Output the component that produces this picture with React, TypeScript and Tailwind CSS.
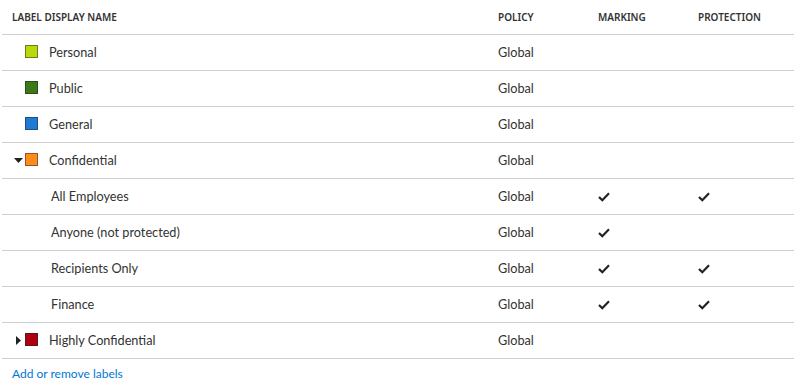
import React from 'react';

type Row = {
    name: string;
    color?: string;
    border?: string;
    arrow?: 'down' | 'right';
    child?: boolean;
    marking?: boolean;
    protection?: boolean;
};

const rows: Row[] = [
    { name: 'Personal', color: 'bg-[#bad80a]', border: 'border-[#6e7d1a]' },
    { name: 'Public', color: 'bg-[#3b7a16]', border: 'border-[#2d4d1f]' },
    { name: 'General', color: 'bg-[#1e7ad3]', border: 'border-[#1d4f80]' },
    { name: 'Confidential', color: 'bg-[#ff8c1a]', border: 'border-[#8a5a2a]', arrow: 'down' },
    { name: 'All Employees', child: true, marking: true, protection: true },
    { name: 'Anyone (not protected)', child: true, marking: true },
    { name: 'Recipients Only', child: true, marking: true, protection: true },
    { name: 'Finance', child: true, marking: true, protection: true },
    { name: 'Highly Confidential', color: 'bg-[#b00010]', border: 'border-[#5a1a1a]', arrow: 'right' },
];

function Check() {
    return (
        <svg width="12" height="10" viewBox="0 0 12 10" className="block">
            <path d="M1 5 L4.3 8.3 L11 1.3" fill="none" stroke="#222" strokeWidth="2.2" />
        </svg>
    );
}

function Arrow({ dir }: { dir: 'down' | 'right' }) {
    if (dir === 'down') {
        return (
            <svg width="9" height="5" viewBox="0 0 9 5" className="block">
                <path d="M0 0 L9 0 L4.5 5 Z" fill="#222" />
            </svg>
        );
    }
    return (
        <svg width="5" height="9" viewBox="0 0 5 9" className="block">
            <path d="M0 0 L5 4.5 L0 9 Z" fill="#222" />
        </svg>
    );
}

export default function App() {
    return (
        <div className="w-[794px] h-[385px] bg-white text-[#333] font-['Segoe_UI','Lato',sans-serif] overflow-hidden">
            <div className="ml-[2px]">
                <div className="flex h-[35px] items-center border-b border-[#cfcfcf] text-[10px] font-semibold text-[#333] font-['Segoe_UI','Noto_Sans',sans-serif]">
                    <div className="w-[484px] pl-[10px]">LABEL DISPLAY NAME</div>
                    <div className="w-[100px] pl-[12px]">POLICY</div>
                    <div className="w-[100px] pl-[12px]">MARKING</div>
                    <div className="flex-1 pl-[12px]">PROTECTION</div>
                </div>
                {rows.map(r => (
                    <div key={r.name} className="flex h-[36px] items-center border-b border-[#cfcfcf] text-[12.7px]">
                        <div className="w-[484px] flex items-center">
                            {r.child ? (
                                <span className="pl-[49px]">{r.name}</span>
                            ) : (
                                <>
                                    <div className="w-[23px] pl-[10px] flex items-center justify-center">
                                        {r.arrow && <Arrow dir={r.arrow} />}
                                    </div>
                                    <div className={`w-[13px] h-[13px] border ${r.color} ${r.border} mb-[2px]`} />
                                    <span className="pl-[11px]">{r.name}</span>
                                </>
                            )}
                        </div>
                        <div className="w-[100px] pl-[12px]">Global</div>
                        <div className="w-[100px] pl-[12px]">{r.marking && <Check />}</div>
                        <div className="flex-1 pl-[12px]">{r.protection && <Check />}</div>
                    </div>
                ))}
                <div className="pl-[10px] pt-[6px] text-[12px] text-[#0078d4]">Add or remove labels</div>
            </div>
        </div>
    );
}
